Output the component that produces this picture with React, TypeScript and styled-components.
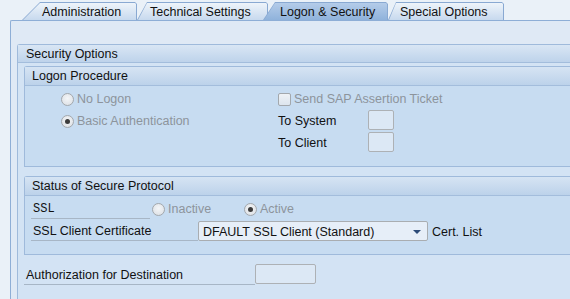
import styled, { createGlobalStyle, css } from "styled-components";

const GlobalStyle = createGlobalStyle`
  html, body {
    margin: 0;
    padding: 0;
    overflow: hidden;
    background: #eaf1f8;
  }
  body {
    font-family: "Liberation Sans", Arial, sans-serif;
    font-size: 12.5px;
    color: #111;
  }
`;

const Page = styled.div`
  height: 299px;
  overflow: hidden;
  padding-left: 10px;
`;

const TabStrip = styled.div`
  display: flex;
  height: 20px;
  padding-left: 12px;
`;

const Tab = styled.div<{ $width: number; $slant: number; $pad: number; $active?: boolean; $overlap?: number }>`
  position: relative;
  box-sizing: border-box;
  width: ${({ $width }) => $width}px;
  height: 18px;
  margin-top: 2px;
  margin-left: ${({ $overlap }) => ($overlap ? -$overlap : 0)}px;
  padding: 2px 0 0 ${({ $pad }) => $pad}px;
  line-height: 16px;
  font-size: 12.5px;
  z-index: ${({ $active }) => ($active ? 2 : 1)};

  &::before,
  &::after {
    content: "";
    position: absolute;
    z-index: -1;
  }
  &::before {
    inset: 0;
    background: #89a9d2;
    clip-path: polygon(
      0 100%,
      ${({ $slant }) => $slant}px 0,
      calc(100% - 2px) 0,
      100% 2px,
      100% 100%
    );
  }
  &::after {
    inset: 1px 1px 0 1px;
    ${({ $active }) =>
      $active
        ? css`background: linear-gradient(#b4cce9, #8fb2db);`
        : css`background: linear-gradient(#eef4fa, #c7d9ee);`}
    clip-path: polygon(
      0 100%,
      ${({ $slant }) => $slant - 1}px 0,
      calc(100% - 1px) 0,
      100% 1px,
      100% 100%
    );
  }
`;

const Panel = styled.div`
  border-top: 1px solid #8eaed6;
  border-left: 1px solid #8eaed6;
  border-top-left-radius: 2px;
  background: #dfe9f5;
  padding: 23px 0 0 6px;
  height: 300px;
`;

// groups run off the right edge of the window, so no right border
const Group = styled.div`
  border: 1px solid #9fbadb;
  border-right: none;
  border-top-left-radius: 3px;
  background: #d3e3f4;
  height: 300px;
`;

const GroupHeader = styled.div`
  height: 17px;
  line-height: 19px;
  padding-left: 8px;
  border-bottom: 1px solid #a3bddc;
  background: linear-gradient(#d9e6f4, #bed3eb);
`;

const GroupBody = styled.div`
  display: flex;
  flex-direction: column;
  gap: 9px;
  padding: 3px 0 0 6px;
`;

const SubGroup = styled.div`
  border: 1px solid #9fbadb;
  border-right: none;
  border-top-left-radius: 3px;
  background: #c7dcf1;
`;

const SubHeader = styled.div`
  height: 18px;
  line-height: 19px;
  padding-left: 7px;
  border-bottom: 1px solid #a3bddc;
  background: linear-gradient(#d6e4f3, #bcd2ea);
`;

const LogonBody = styled.div`
  display: grid;
  grid-template-columns: 217px 90px auto;
  grid-auto-rows: 22px;
  align-items: center;
  padding: 2px 0 12px 36px;
`;

const Choice = styled.label<{ $disabled?: boolean }>`
  display: flex;
  align-items: center;
  gap: 3px;
  white-space: nowrap;
  color: ${({ $disabled }) => ($disabled ? "#8d949c" : "#111")};
`;

const Radio = styled.span<{ $checked?: boolean }>`
  box-sizing: border-box;
  width: 13px;
  height: 13px;
  border-radius: 50%;
  border: 1px solid #a3a8ad;
  background: radial-gradient(circle at 50% 40%, #f4f6f8, #d9dde2);
  display: flex;
  align-items: center;
  justify-content: center;

  &::after {
    content: "";
    width: 5px;
    height: 5px;
    border-radius: 50%;
    background: ${({ $checked }) => ($checked ? "#3c3c3c" : "transparent")};
  }
`;

const Checkbox = styled.span`
  box-sizing: border-box;
  width: 13px;
  height: 13px;
  border: 1px solid #a3a8ad;
  border-radius: 2px;
  background: linear-gradient(#eef2f6, #dde5ee);
`;

const Label = styled.span`
  white-space: nowrap;
`;

const SmallInput = styled.input<{ $width: number }>`
  box-sizing: border-box;
  width: ${({ $width }) => $width}px;
  height: 20px;
  border: 1px solid #adb1b5;
  border-radius: 2px;
  background: #dce8f5;
  outline: none;
  padding: 0 3px;
  font: inherit;
  align-self: start;
`;

const StatusBody = styled.div`
  display: flex;
  flex-direction: column;
  gap: 1px;
  padding: 2px 0 13px 6px;
`;

const Row = styled.div`
  display: flex;
  align-items: flex-end;
`;

const FieldLabel = styled.div<{ $width: number; $mono?: boolean }>`
  box-sizing: border-box;
  width: ${({ $width }) => $width}px;
  height: 21px;
  line-height: 22px;
  padding-left: 2px;
  border-bottom: 1px solid #a7b6c6;
  white-space: nowrap;
  ${({ $mono }) =>
    $mono &&
    css`
      font-family: "Liberation Mono", "Courier New", monospace;
      font-size: 12px;
    `}
`;

const RadioGroup = styled.div`
  display: flex;
  height: 20px;
  align-items: center;
  padding-left: 2px;
`;

const RadioSlot = styled.div<{ $width: number }>`
  width: ${({ $width }) => $width}px;
`;

const Select = styled.div`
  box-sizing: border-box;
  width: 230px;
  height: 20px;
  display: flex;
  align-items: center;
  justify-content: space-between;
  padding: 1px 6px 0 4px;
  border: 1px solid #a9adb1;
  border-radius: 2px;
  background: #e6eef8;
  white-space: nowrap;
`;

const Arrow = styled.span`
  width: 0;
  height: 0;
  border-left: 4px solid transparent;
  border-right: 4px solid transparent;
  border-top: 4px solid #2b4a78;
`;

const Trailing = styled.span`
  margin: 0 0 2px 4px;
  white-space: nowrap;
`;

const AuthRow = styled.div`
  display: flex;
  align-items: flex-end;
`;

const tabs = [
  { text: "Administration", width: 115, slant: 18, pad: 20 },
  { text: "Technical Settings", width: 131, slant: 10, pad: 13 },
  { text: "Logon & Security", width: 125, slant: 12, pad: 17, active: true, overlap: 5 },
  { text: "Special Options", width: 116, slant: 8, pad: 12 },
];

export default function App() {
  return (
    <>
      <GlobalStyle />
      <Page>
        <TabStrip>
          {tabs.map((t) => (
            <Tab
              key={t.text}
              $width={t.width}
              $slant={t.slant}
              $pad={t.pad}
              $active={t.active}
              $overlap={t.overlap}
            >
              {t.text}
            </Tab>
          ))}
        </TabStrip>
        <Panel>
          <Group>
            <GroupHeader>Security Options</GroupHeader>
            <GroupBody>
              <SubGroup>
                <SubHeader>Logon Procedure</SubHeader>
                <LogonBody>
                  <Choice $disabled>
                    <Radio />
                    No Logon
                  </Choice>
                  <Choice $disabled style={{ gridColumn: "2 / 4" }}>
                    <Checkbox />
                    Send SAP Assertion Ticket
                  </Choice>
                  <Choice $disabled>
                    <Radio $checked />
                    Basic Authentication
                  </Choice>
                  <Label>To System</Label>
                  <SmallInput $width={26} />
                  <span />
                  <Label>To Client</Label>
                  <SmallInput $width={26} />
                </LogonBody>
              </SubGroup>
              <SubGroup>
                <SubHeader>Status of Secure Protocol</SubHeader>
                <StatusBody>
                  <Row>
                    <FieldLabel $width={119} $mono>
                      SSL
                    </FieldLabel>
                    <RadioGroup>
                      <RadioSlot $width={92}>
                        <Choice $disabled>
                          <Radio />
                          Inactive
                        </Choice>
                      </RadioSlot>
                      <RadioSlot $width={80}>
                        <Choice $disabled>
                          <Radio $checked />
                          Active
                        </Choice>
                      </RadioSlot>
                    </RadioGroup>
                  </Row>
                  <Row>
                    <FieldLabel $width={167}>SSL Client Certificate</FieldLabel>
                    <Select>
                      DFAULT SSL Client (Standard)
                      <Arrow />
                    </Select>
                    <Trailing>Cert. List</Trailing>
                  </Row>
                </StatusBody>
              </SubGroup>
              <AuthRow>
                <FieldLabel $width={231}>Authorization for Destination</FieldLabel>
                <SmallInput $width={61} />
              </AuthRow>
            </GroupBody>
          </Group>
        </Panel>
      </Page>
    </>
  );
}
